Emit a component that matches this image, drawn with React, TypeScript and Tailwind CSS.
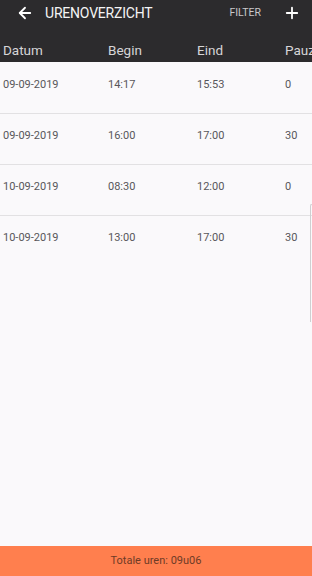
import { ArrowLeft, Plus } from "lucide-react";

const rows = [
  { date: "09-09-2019", begin: "14:17", end: "15:53", pause: "0" },
  { date: "09-09-2019", begin: "16:00", end: "17:00", pause: "30" },
  { date: "10-09-2019", begin: "08:30", end: "12:00", pause: "0" },
  { date: "10-09-2019", begin: "13:00", end: "17:00", pause: "30" },
];

export default function App() {
  return (
    <div className="relative w-[312px] h-[576px] flex flex-col bg-[#faf9fb] overflow-hidden font-['Roboto',sans-serif]">
      <header className="bg-[#2c2b2d] h-[62px] shrink-0 flex flex-col">
        <div className="h-[26px] flex items-center pl-[16px] pr-[11px]">
          <ArrowLeft className="w-[18px] h-[18px] text-white" strokeWidth={2.4} />
          <span className="ml-[11px] text-[#f4f4f4] text-[14px] tracking-[-0.2px]">URENOVERZICHT</span>
          <span className="ml-auto text-[#c9c8ca] text-[10.5px]">FILTER</span>
          <Plus className="ml-[22px] w-[18px] h-[18px] text-white" strokeWidth={2.4} />
        </div>
        <div className="mt-[14px] grid grid-cols-[105px_89px_88px_60px] pl-[3px] text-[13.5px] text-[#d6d5d7] whitespace-nowrap">
          <span>Datum</span>
          <span>Begin</span>
          <span>Eind</span>
          <span>Pauze</span>
        </div>
      </header>

      <main className="flex-1 flex flex-col pt-[1px]">
        {rows.map((r, i) => (
          <div
            key={i}
            className={`h-[51px] pt-[14px] grid grid-cols-[105px_89px_88px_60px] pl-[3px] text-[11px] text-[#58575a] whitespace-nowrap ${
              i < rows.length - 1 ? "border-b border-[#e2e1e3]" : ""
            }`}
          >
            <span>{r.date}</span>
            <span>{r.begin}</span>
            <span>{r.end}</span>
            <span>{r.pause}</span>
          </div>
        ))}
      </main>

      <div className="absolute right-0 top-[204px] w-[2px] h-[118px] border-l border-t border-[#cfcfd1] rounded-tl-[2px]" />

      <footer className="h-[30px] shrink-0 bg-[#ff7f4e] flex items-center justify-center text-[11px] text-[#6e3b26]">
        Totale uren: 09u06
      </footer>
    </div>
  );
}
